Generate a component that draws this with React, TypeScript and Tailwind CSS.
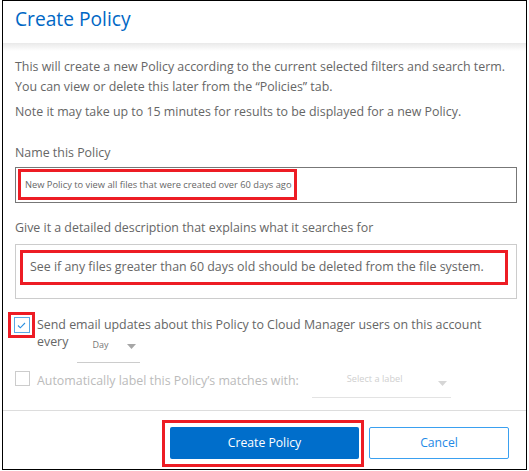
import React from "react";

const font = { fontFamily: '"Open Sans", "Noto Sans", sans-serif' };

const Caret = ({ light }: { light?: boolean }) => (
  <svg width="9" height="5" viewBox="0 0 9 5" className="shrink-0">
    <path d="M0 0h9L4.5 5z" fill={light ? "#d6d6d6" : "#a6a6a6"} />
  </svg>
);

const App = () => {
  return (
    <div className="w-[529px] h-[471px] bg-white" style={font}>
      <div className="ml-[2px] w-[525px] h-[470px] border border-black flex flex-col">
        {/* header */}
        <div className="h-[42px] pl-[12px] pt-[4px]">
          <h1 className="text-[19.2px] leading-[28px] text-[#0067c5]">Create Policy</h1>
        </div>
        <div className="h-[8px] bg-gradient-to-b from-[#e9e9e9] to-white" />

        {/* body */}
        <div className="pl-[12px] pr-[9px] text-[#666666]">
          <p className="mt-[6px] text-[12.4px] leading-[20px]">
            This will create a new Policy according to the current selected filters and search term.
            <br />
            You can view or delete this later from the “Policies” tab.
          </p>
          <p className="mt-[5px] text-[12.4px] leading-[20px]">
            Note it may take up to 15 minutes for results to be displayed for a new Policy.
          </p>

          <div className="mt-[21px] text-[12.4px] leading-[20px]">Name this Policy</div>
          <div className="mt-[4px] h-[36px] border border-[#777777] pl-[2px] pt-[1px]">
            <div className="flex items-center h-[31px] w-[279px] border-[3px] border-[#ed1c24] pl-[4px] text-[9.3px] text-[#666666] whitespace-nowrap">
              New Policy to view all files that were created over 60 days ago
            </div>
          </div>

          <div className="mt-[15px] text-[12.4px] leading-[20px]">
            Give it a detailed description that explains what it searches for
          </div>
          <div className="mt-[6px] h-[55px] border border-[#cccccc] pl-[4px] pt-[5px]">
            <div className="flex items-center h-[35px] w-[488px] border-[3px] border-[#ed1c24] pl-[7px] text-[12.4px] text-[#666666] whitespace-nowrap">
              See if any files greater than 60 days old should be deleted from the file system.
            </div>
          </div>

          {/* email option */}
          <div className="mt-[13px] flex items-start ml-[-7px]">
            <div className="w-[27px] h-[26px] border-[3px] border-[#ed1c24] flex items-center justify-center shrink-0">
              <div className="w-[16px] h-[16px] border border-[#5aa9e6] flex items-center justify-center">
                <svg width="9" height="7" viewBox="0 0 9 7">
                  <path d="M1 3.5l2.3 2.3L8 1" fill="none" stroke="#2b8fe0" strokeWidth="1.1" />
                </svg>
              </div>
            </div>
            <div className="ml-[2px] mt-[4px] text-[12.4px] leading-[17px] text-[#666666]">
              <div className="whitespace-nowrap">
                Send email updates about this Policy to Cloud Manager users on this account
              </div>
              <div className="flex items-start">
                <span>every</span>
                <div className="ml-[9px] mt-[3px] w-[63px] h-[27px] border-b border-[#cccccc] flex items-start pt-[2px] pl-[15px] pr-[4px]">
                  <span className="text-[9px] leading-[14px] text-[#777777]">Day</span>
                  <span className="ml-auto mt-[6px]">
                    <Caret />
                  </span>
                </div>
              </div>
            </div>
          </div>

          {/* label option */}
          <div className="mt-[8px] flex items-start">
            <div className="w-[15px] h-[15px] border border-[#cccccc] shrink-0" />
            <span className="ml-[7px] mt-[1px] text-[12.4px] leading-[17px] text-[#bbbbbb] whitespace-nowrap">
              Automatically label this Policy’s matches with:
            </span>
            <div className="ml-[13px] w-[139px] h-[27px] border-b border-[#e3e3e3] flex items-start pl-[35px] pr-[4px] pt-[1px]">
              <span className="text-[9.2px] leading-[14px] text-[#cfcfcf] whitespace-nowrap">Select a label</span>
              <span className="ml-auto mt-[9px]">
                <Caret light />
              </span>
            </div>
          </div>
        </div>

        {/* footer */}
        <div className="mt-auto h-[59px] border-t border-[#dddddd] flex items-start justify-end pt-[9px] pr-[17px]">
          <div className="border-[3px] border-[#ed1c24] pl-[5px] pr-[2px] pt-[4px] pb-[5px]">
            <button className="w-[189px] h-[32px] bg-[#006ecb] text-white text-[12.2px] rounded-[2px]">
              Create Policy
            </button>
          </div>
          <button className="ml-[5px] mt-[7px] w-[140px] h-[32px] border border-[#3aa0f0] text-[#1f8ae6] text-[12.2px] rounded-[2px] bg-white">
            Cancel
          </button>
        </div>
      </div>
    </div>
  );
};

export default App;
